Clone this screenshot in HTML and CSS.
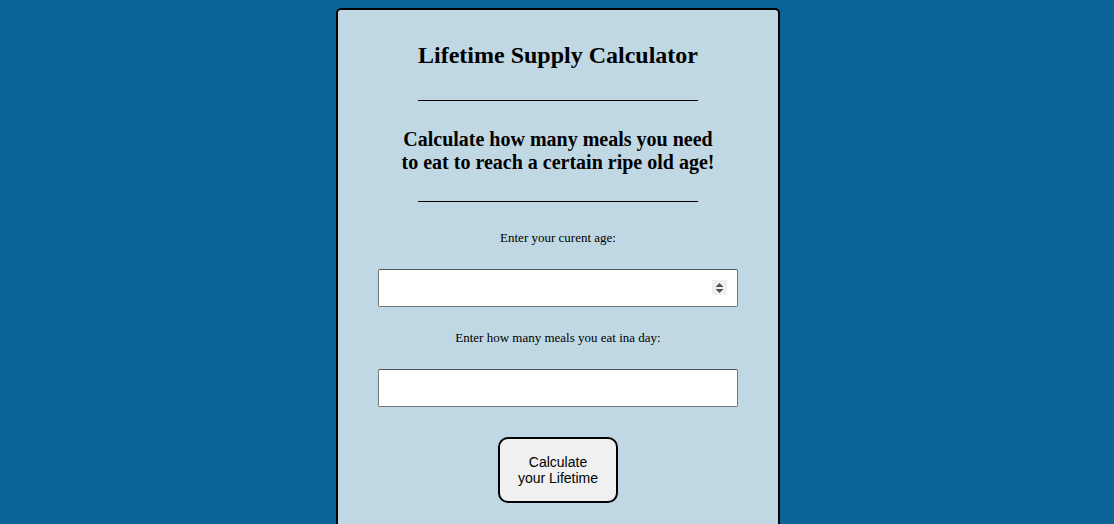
FILE: index.html
```html
<!DOCTYPE html>
<html>
<head>
<meta charset="utf-8">
<title>Lifetime Supply Calculator</title>
<link rel="stylesheet" href="styles.css">
</head>
<body>
<main class="card">
  <h1 class="title">Lifetime Supply Calculator</h1>
  <hr class="rule rule-top">
  <h2 class="subtitle">Calculate how many meals you need<br>to eat to reach a certain ripe old age!</h2>
  <hr class="rule rule-bottom">
  <label class="label label-age" for="age">Enter your curent age:</label>
  <div class="field field-age">
    <input class="input" id="age" type="text">
    <span class="spinner" aria-hidden="true">
      <svg width="9" height="12" viewBox="0 0 9 12"><path d="M4.5 1 L8.5 5 L0.5 5 Z M4.5 11 L8.5 7 L0.5 7 Z" fill="#505050"/></svg>
    </span>
  </div>
  <label class="label label-meals" for="meals">Enter how many meals you eat ina day:</label>
  <div class="field field-meals">
    <input class="input" id="meals" type="text">
  </div>
  <button class="calc-btn" type="button">Calculate<br>your Lifetime</button>
</main>
</body>
</html>
```
FILE: styles.css
```css
html, body {
  margin: 0;
  padding: 0;
}
body {
  background: #0a6498;
  padding: 8px 0 0 2px;
  font-family: "Liberation Serif", "Times New Roman", serif;
  color: #000;
  height: 524px;
  box-sizing: border-box;
  overflow: hidden;
}
.card {
  width: 440px;
  margin: 0 auto;
  height: 600px;
  background: #c0d8e4;
  border: 2px solid #000;
  border-radius: 5px;
  display: flex;
  flex-direction: column;
  align-items: center;
  box-sizing: content-box;
}
.title {
  font-size: 24px;
  font-weight: bold;
  margin: 32px 0 0;
  line-height: 27px;
  text-align: center;
}
.rule {
  width: 280px;
  height: 0;
  border: 0;
  border-top: 1px solid #000;
  margin: 0;
}
.rule-top {
  margin-top: 31px;
}
.subtitle {
  font-size: 20px;
  font-weight: bold;
  line-height: 23px;
  margin: 27px 0 0;
  text-align: center;
}
.rule-bottom {
  margin-top: 27px;
}
.label {
  font-size: 13px;
  line-height: 15px;
  display: block;
  text-align: center;
}
.label-age {
  margin-top: 28px;
}
.label-meals {
  margin-top: 23px;
}
.field {
  position: relative;
  width: 360px;
  margin-top: 24px;
}
.input {
  display: block;
  width: 360px;
  height: 38px;
  box-sizing: border-box;
  border: 1px solid #767676;
  border-top-color: #555;
  border-radius: 2px;
  background: #fff;
  margin: 0;
  padding: 0 8px;
  font-size: 13px;
}
.spinner {
  position: absolute;
  right: 11px;
  top: 11px;
  width: 15px;
  height: 15px;
  background: #efefef;
  display: flex;
  align-items: center;
  justify-content: center;
}
.calc-btn {
  margin-top: 30px;
  width: 120px;
  height: 66px;
  border: 2px solid #000;
  border-radius: 10px;
  background: #f0f0f0;
  font-family: "Liberation Sans", Arial, sans-serif;
  font-size: 14px;
  line-height: 16px;
  color: #000;
  padding: 0;
}
```
